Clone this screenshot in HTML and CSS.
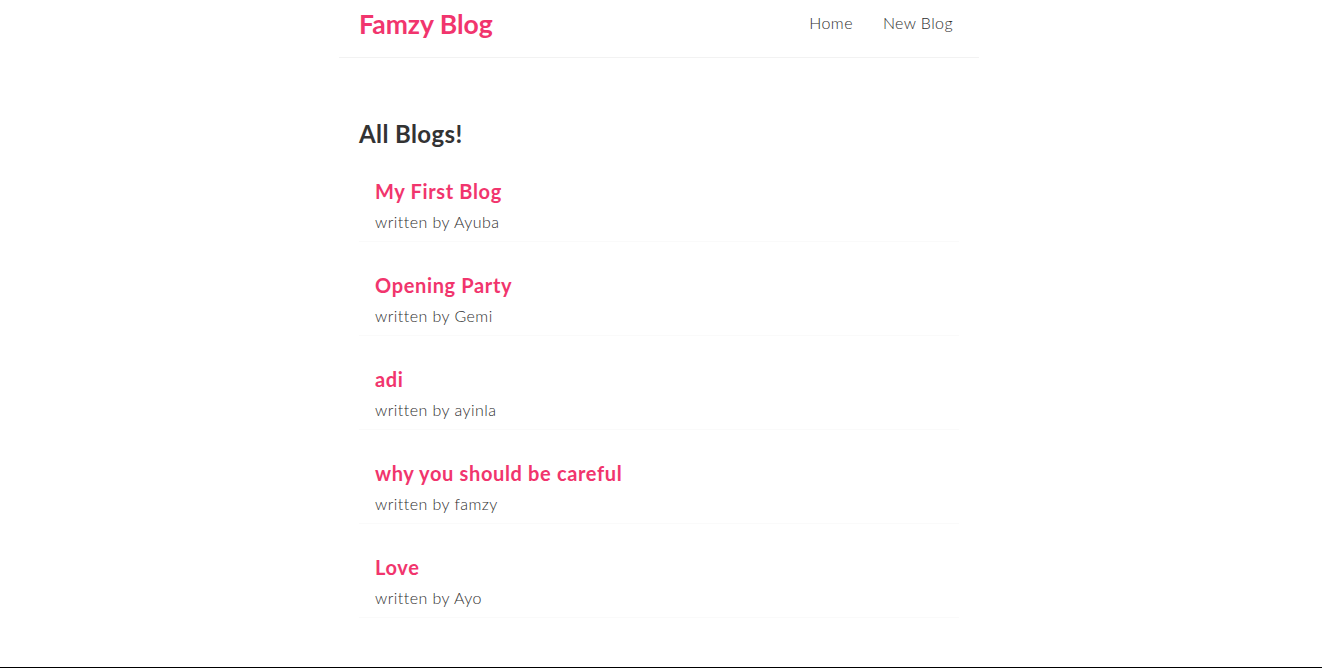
FILE: index.html
```html
<!DOCTYPE html>
<html lang="en">
<head>
<meta charset="utf-8">
<title>Famzy Blog</title>
<link rel="stylesheet" href="styles.css">
</head>
<body>
<div class="app">
  <nav class="navbar">
    <h1 class="brand">Famzy Blog</h1>
    <div class="links">
      <a href="#" class="nav-link">Home</a>
      <a href="#" class="nav-link">New Blog</a>
    </div>
  </nav>
  <main class="content">
    <section class="home">
      <h2 class="page-title">All Blogs!</h2>
      <div class="blog-list">
        <article class="blog-preview">
          <h2 class="blog-title">My First Blog</h2>
          <p class="blog-author">written by Ayuba</p>
        </article>
        <article class="blog-preview">
          <h2 class="blog-title">Opening Party</h2>
          <p class="blog-author">written by Gemi</p>
        </article>
        <article class="blog-preview">
          <h2 class="blog-title">adi</h2>
          <p class="blog-author">written by ayinla</p>
        </article>
        <article class="blog-preview">
          <h2 class="blog-title">why you should be careful</h2>
          <p class="blog-author">written by famzy</p>
        </article>
        <article class="blog-preview">
          <h2 class="blog-title">Love</h2>
          <p class="blog-author">written by Ayo</p>
        </article>
      </div>
    </section>
  </main>
</div>
<div class="frame-edge"></div>
</body>
</html>
```
FILE: styles.css
```css
* {
  margin: 0;
  box-sizing: content-box;
}

body {
  background: #fff;
  color: #333;
  font-family: "Lato", "Noto Sans", sans-serif;
  padding-right: 4px;
}

.navbar {
  display: flex;
  align-items: center;
  max-width: 600px;
  margin: 0 auto;
  padding: 0 20px 11px;
  height: 46px;
  border-bottom: 1px solid #f2f2f2;
}

.brand {
  color: #f1356d;
  font-size: 26.5px;
  font-weight: 700;
  line-height: 34px;
  padding-top: 1px;
}

.links {
  margin-left: auto;
  display: flex;
}

.nav-link {
  margin-left: 16px;
  padding: 6px;
  color: #2e2e2e;
  text-decoration: none;
  font-size: 16px;
  font-weight: 300;
  line-height: 20px;
  letter-spacing: 0.4px;
}

.nav-link:first-child {
  margin-right: 2px;
}

.content {
  max-width: 600px;
  margin: 40px auto;
  padding: 20px;
}

.page-title {
  font-size: 24px;
  font-weight: 700;
  line-height: 28px;
  padding-top: 2px;
  color: #333;
  letter-spacing: 0.4px;
}

.blog-preview {
  padding: 10px 16px 9px;
  margin: 20px 0;
  border-bottom: 1px solid #fafafa;
}

.blog-title {
  font-size: 20px;
  font-weight: 700;
  line-height: 25px;
  padding-top: 1px;
  color: #f1356d;
  margin-bottom: 7px;
  letter-spacing: 0.65px;
}

.blog-author {
  font-size: 16px;
  font-weight: 300;
  line-height: 20px;
  padding-top: 1px;
  color: #2e2e2e;
  letter-spacing: 0.45px;
}

.frame-edge {
  position: fixed;
  left: 0;
  right: 0;
  bottom: 0;
  height: 1px;
  background: #000;
}
```
